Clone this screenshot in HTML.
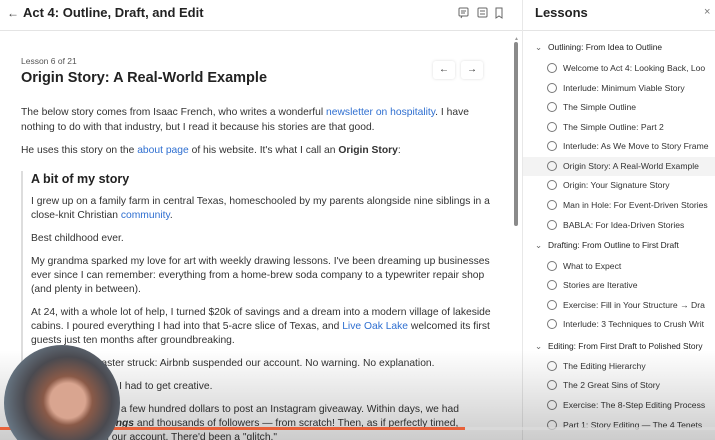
<!DOCTYPE html>
<html><head><style>
*{margin:0;padding:0;box-sizing:border-box}
html,body{width:715px;height:440px;overflow:hidden}
body{background:#fff;font-family:"Liberation Sans",sans-serif;color:#2a2a2a;position:relative}
.a{position:absolute;white-space:nowrap}
.p{font-size:10.3px;color:#333}
a{color:#2f6fd0;text-decoration:none}
.s{font-size:8.6px;color:#333;left:563px}
.c{position:absolute;left:547px;width:10px;height:10px;border:1px solid #777;border-radius:50%}
.h{font-size:8.4px;color:#222;left:547px}
</style></head><body>
<div class="a" style="left:7px;top:6px;font-size:12px;color:#444">←</div>
<div class="a" style="left:23px;top:5px;font-size:13px;font-weight:bold;color:#222">Act 4: Outline, Draft, and Edit</div>
<svg class="a" style="left:458px;top:7px" width="50" height="12" viewBox="0 0 50 12" fill="none" stroke="#666" stroke-width="1"><rect x="1" y="1" width="9" height="8" rx="1"/><path d="M3 4h5M3 6h4M4 9l-1 2"/><rect x="20" y="1" width="9" height="9" rx="1"/><path d="M22 4h5M22 7h5"/><path d="M38 1h6v10l-3-2-3 2z"/></svg>
<div class="a" style="left:0;top:30px;width:522px;height:1px;background:#e4e4e4"></div>
<div class="a" style="left:522px;top:0;width:1px;height:440px;background:#e8e8e8"></div>
<div class="a" style="left:535px;top:5px;font-size:13px;font-weight:bold;color:#222">Lessons</div>
<div class="a" style="left:704px;top:6px;font-size:11px;color:#777">×</div>
<div class="a" style="left:523px;top:30px;width:192px;height:1px;background:#e4e4e4"></div>
<div class="a" style="left:514px;top:36px;font-size:5px;color:#999">▲</div>
<div class="a" style="left:514px;top:42px;width:4px;height:184px;background:#8a8a8a;border-radius:2px"></div>

<div class="a" style="left:21px;top:56px;font-size:8.5px;color:#555">Lesson 6 of 21</div>
<div class="a" style="left:21px;top:70px;font-size:14.5px;font-weight:bold;color:#222">Origin Story: A Real-World Example</div>
<div class="a" style="left:433px;top:61px;width:22px;height:18px;border-radius:3px;box-shadow:0 0 3px #ddd;font-size:10px;text-align:center;line-height:18px">←</div>
<div class="a" style="left:461px;top:61px;width:22px;height:18px;border-radius:3px;box-shadow:0 0 3px #ddd;font-size:10px;text-align:center;line-height:18px">→</div>

<div class="a p" style="left:21px;top:107px">The below story comes from Isaac French, who writes a wonderful <a>newsletter on hospitality</a>. I have</div>
<div class="a p" style="left:21px;top:122px">nothing to do with that industry, but I read it because his stories are that good.</div>
<div class="a p" style="left:21px;top:145px">He uses this story on the <a>about page</a> of his website. It's what I call an <b>Origin Story</b>:</div>
<div class="a" style="left:21px;top:171px;width:2px;height:269px;background:#ddd"></div>
<div class="a" style="left:31px;top:172px;font-size:12.5px;font-weight:bold;color:#222">A bit of my story</div>
<div class="a p" style="left:31px;top:196px">I grew up on a family farm in central Texas, homeschooled by my parents alongside nine siblings in a</div>
<div class="a p" style="left:31px;top:210px">close-knit Christian <a>community</a>.</div>
<div class="a p" style="left:31px;top:233px">Best childhood ever.</div>
<div class="a p" style="left:31px;top:256px">My grandma sparked my love for art with weekly drawing lessons. I've been dreaming up businesses</div>
<div class="a p" style="left:31px;top:270px">ever since I can remember: everything from a home-brew soda company to a typewriter repair shop</div>
<div class="a p" style="left:31px;top:284px">(and plenty in between).</div>
<div class="a p" style="left:31px;top:307px">At 24, with a whole lot of help, I turned $20k of savings and a dream into a modern village of lakeside</div>
<div class="a p" style="left:31px;top:321px">cabins. I poured everything I had into that 5-acre slice of Texas, and <a>Live Oak Lake</a> welcomed its first</div>
<div class="a p" style="left:31px;top:335px">guests just ten months after groundbreaking.</div>
<div class="a p" style="left:31px;top:358px">A year later, disaster struck: Airbnb suspended our account. No warning. No explanation.</div>
<div class="a p" style="left:31px;top:381px">With debt looming, I had to get creative.</div>
<div class="a p" style="left:31px;top:404px">I paid an influencer a few hundred dollars to post an Instagram giveaway. Within days, we had</div>
<div class="a p" style="left:31px;top:418px">hundreds of <b><i>bookings</i></b> and thousands of followers — from scratch! Then, as if perfectly timed,</div>
<div class="a p" style="left:31px;top:432px">Airbnb reinstated our account. There'd been a "glitch."</div>

<div class="a h" style="top:42px"><span style="color:#666;margin-left:-12px;margin-right:6px">⌄</span>Outlining: From Idea to Outline</div>
<div class="a" style="left:523px;top:157px;width:192px;height:19px;background:#f3f3f3"></div>
<div class="c" style="top:63px"></div><div class="a s" style="top:63px">Welcome to Act 4: Looking Back, Loo</div>
<div class="c" style="top:83px"></div><div class="a s" style="top:83px">Interlude: Minimum Viable Story</div>
<div class="c" style="top:102px"></div><div class="a s" style="top:102px">The Simple Outline</div>
<div class="c" style="top:122px"></div><div class="a s" style="top:122px">The Simple Outline: Part 2</div>
<div class="c" style="top:141px"></div><div class="a s" style="top:141px">Interlude: As We Move to Story Frame</div>
<div class="c" style="top:161px"></div><div class="a s" style="top:161px">Origin Story: A Real-World Example</div>
<div class="c" style="top:180px"></div><div class="a s" style="top:180px">Origin: Your Signature Story</div>
<div class="c" style="top:200px"></div><div class="a s" style="top:200px">Man in Hole: For Event-Driven Stories</div>
<div class="c" style="top:220px"></div><div class="a s" style="top:220px">BABLA: For Idea-Driven Stories</div>
<div class="a h" style="top:240px"><span style="color:#666;margin-left:-12px;margin-right:6px">⌄</span>Drafting: From Outline to First Draft</div>
<div class="c" style="top:261px"></div><div class="a s" style="top:261px">What to Expect</div>
<div class="c" style="top:280px"></div><div class="a s" style="top:280px">Stories are Iterative</div>
<div class="c" style="top:300px"></div><div class="a s" style="top:300px">Exercise: Fill in Your Structure → Dra</div>
<div class="c" style="top:319px"></div><div class="a s" style="top:319px">Interlude: 3 Techniques to Crush Writ</div>
<div class="a h" style="top:341px"><span style="color:#666;margin-left:-12px;margin-right:6px">⌄</span>Editing: From First Draft to Polished Story</div>
<div class="c" style="top:361px"></div><div class="a s" style="top:361px">The Editing Hierarchy</div>
<div class="c" style="top:380px"></div><div class="a s" style="top:380px">The 2 Great Sins of Story</div>
<div class="c" style="top:400px"></div><div class="a s" style="top:400px">Exercise: The 8-Step Editing Process</div>
<div class="c" style="top:420px"></div><div class="a s" style="top:420px">Part 1: Story Editing — The 4 Tenets</div>

<div class="a" style="left:0;top:350px;width:715px;height:90px;background:linear-gradient(rgba(0,0,0,0),rgba(0,0,0,0.2))"></div>
<div class="a" style="left:0;top:427px;width:715px;height:3px;background:rgba(220,220,220,0.7)"></div>
<div class="a" style="left:0;top:427px;width:465px;height:3px;background:#e8613a"></div>
<div class="a" style="left:4px;top:345px;width:116px;height:116px;border-radius:50%;background:radial-gradient(circle at 55% 48%,#d9a590 0 20%,#8a5a48 28%,#4a4a50 50%,#6a7a88 75%,#9aa8b4 90%)"></div>
</body></html>
